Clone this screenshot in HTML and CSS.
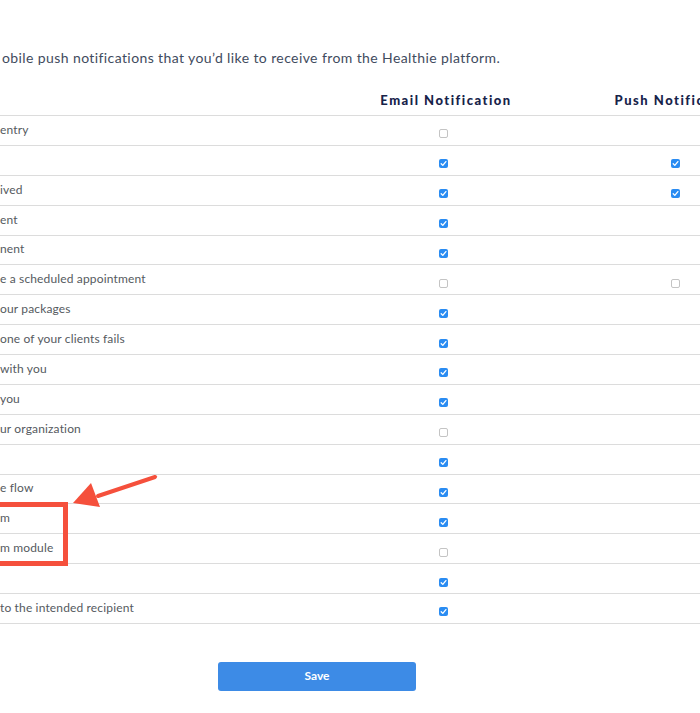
FILE: index.html
```html
<!DOCTYPE html>
<html>
<head>
<meta charset="utf-8">
<link rel="stylesheet" href="styles.css">
</head>
<body>
<div class="page">
  <p class="intro">obile push notifications that you’d like to receive from the Healthie platform.</p>
  <div class="table">
    <div class="row head">
      <div class="label"></div>
      <div class="col">Email Notification</div>
      <div class="col">Push Notification</div>
    </div>
    <div class="row"><div class="label">entry</div><div class="col"><span class="cb"></span></div><div class="col"></div></div>
    <div class="row"><div class="label"></div><div class="col"><span class="cb on"><svg viewBox="0 0 9 9"><path d="M2.2 4.8 L3.8 6.4 L6.9 2.6"/></svg></span></div><div class="col"><span class="cb on"><svg viewBox="0 0 9 9"><path d="M2.2 4.8 L3.8 6.4 L6.9 2.6"/></svg></span></div></div>
    <div class="row"><div class="label">ived</div><div class="col"><span class="cb on"><svg viewBox="0 0 9 9"><path d="M2.2 4.8 L3.8 6.4 L6.9 2.6"/></svg></span></div><div class="col"><span class="cb on"><svg viewBox="0 0 9 9"><path d="M2.2 4.8 L3.8 6.4 L6.9 2.6"/></svg></span></div></div>
    <div class="row"><div class="label">ent</div><div class="col"><span class="cb on"><svg viewBox="0 0 9 9"><path d="M2.2 4.8 L3.8 6.4 L6.9 2.6"/></svg></span></div><div class="col"></div></div>
    <div class="row"><div class="label">nent</div><div class="col"><span class="cb on"><svg viewBox="0 0 9 9"><path d="M2.2 4.8 L3.8 6.4 L6.9 2.6"/></svg></span></div><div class="col"></div></div>
    <div class="row"><div class="label">e a scheduled appointment</div><div class="col"><span class="cb"></span></div><div class="col"><span class="cb"></span></div></div>
    <div class="row"><div class="label">our packages</div><div class="col"><span class="cb on"><svg viewBox="0 0 9 9"><path d="M2.2 4.8 L3.8 6.4 L6.9 2.6"/></svg></span></div><div class="col"></div></div>
    <div class="row"><div class="label">one of your clients fails</div><div class="col"><span class="cb on"><svg viewBox="0 0 9 9"><path d="M2.2 4.8 L3.8 6.4 L6.9 2.6"/></svg></span></div><div class="col"></div></div>
    <div class="row"><div class="label">with you</div><div class="col"><span class="cb on"><svg viewBox="0 0 9 9"><path d="M2.2 4.8 L3.8 6.4 L6.9 2.6"/></svg></span></div><div class="col"></div></div>
    <div class="row"><div class="label">you</div><div class="col"><span class="cb on"><svg viewBox="0 0 9 9"><path d="M2.2 4.8 L3.8 6.4 L6.9 2.6"/></svg></span></div><div class="col"></div></div>
    <div class="row"><div class="label">ur organization</div><div class="col"><span class="cb"></span></div><div class="col"></div></div>
    <div class="row"><div class="label"></div><div class="col"><span class="cb on"><svg viewBox="0 0 9 9"><path d="M2.2 4.8 L3.8 6.4 L6.9 2.6"/></svg></span></div><div class="col"></div></div>
    <div class="row"><div class="label">e flow</div><div class="col"><span class="cb on"><svg viewBox="0 0 9 9"><path d="M2.2 4.8 L3.8 6.4 L6.9 2.6"/></svg></span></div><div class="col"></div></div>
    <div class="row"><div class="label">m</div><div class="col"><span class="cb on"><svg viewBox="0 0 9 9"><path d="M2.2 4.8 L3.8 6.4 L6.9 2.6"/></svg></span></div><div class="col"></div></div>
    <div class="row"><div class="label">m module</div><div class="col"><span class="cb"></span></div><div class="col"></div></div>
    <div class="row"><div class="label"></div><div class="col"><span class="cb on"><svg viewBox="0 0 9 9"><path d="M2.2 4.8 L3.8 6.4 L6.9 2.6"/></svg></span></div><div class="col"></div></div>
    <div class="row"><div class="label">to the intended recipient</div><div class="col"><span class="cb on"><svg viewBox="0 0 9 9"><path d="M2.2 4.8 L3.8 6.4 L6.9 2.6"/></svg></span></div><div class="col"></div></div>
  </div>
  <div class="actions"><button class="save">Save</button></div>

  <div class="highlight"></div>
  <svg class="arrow" width="100" height="50" viewBox="0 0 100 50">
    <line x1="85" y1="3" x2="28" y2="22" stroke="#f5503c" stroke-width="4" stroke-linecap="round"/>
    <polygon points="3,29 21,9 30,33" fill="#f5503c"/>
  </svg>
</div>
</body>
</html>
```

FILE: styles.css
```css
html, body {
  margin: 0;
  padding: 0;
  background: #fff;
  overflow: hidden;
}

.page {
  position: relative;
  width: 700px;
  height: 713px;
  font-family: Lato, "Noto Sans", sans-serif;
}

.intro {
  margin: 0;
  padding: 48px 0 0 2px;
  font-size: 14px;
  letter-spacing: 0.4px;
  line-height: 20px;
  color: #3f4b5e;
}

.table {
  margin-top: 20px;
}

.row {
  display: grid;
  grid-template-columns: 328px 232px 232px;
  height: 29.88px;
  box-sizing: border-box;
  border-bottom: 1px solid #dcdcdc;
  align-items: center;
}

.row.head {
  height: 28px;
  align-items: start;
  padding-top: 4px;
}

.head .col {
  font-weight: 900;
  font-size: 13px;
  letter-spacing: 1.5px;
  color: #17234a;
  line-height: 16px;
  padding-left: 6px;
}

.label {
  font-size: 12px;
  letter-spacing: 0.15px;
  color: #555a60;
  line-height: 16px;
  padding-bottom: 1px;
}

.col {
  display: flex;
  justify-content: center;
  padding-right: 2px;
}

.cb {
  display: block;
  width: 9px;
  height: 9px;
  box-sizing: border-box;
  border: 1px solid #c4c4c4;
  border-radius: 2px;
  margin-top: 7px;
  background: #fff;
}

.cb.on {
  border: none;
  background: #2a8cf2;
}

.cb svg {
  display: block;
  width: 9px;
  height: 9px;
}

.cb svg path {
  fill: none;
  stroke: #fff;
  stroke-width: 1.3;
  stroke-linecap: round;
  stroke-linejoin: round;
}

.actions {
  padding: 38px 0 0 218px;
}

.save {
  display: block;
  width: 198px;
  height: 29px;
  border: none;
  border-radius: 3px;
  background: #3d8be6;
  color: #fff;
  font-family: Lato, "Noto Sans", sans-serif;
  font-weight: 700;
  font-size: 12px;
  padding: 0 0 1px;
}

.highlight {
  position: absolute;
  left: -20px;
  top: 502px;
  width: 88px;
  height: 64px;
  box-sizing: border-box;
  border: 5px solid #f5503c;
}

.arrow {
  position: absolute;
  left: 70px;
  top: 474px;
}
```
